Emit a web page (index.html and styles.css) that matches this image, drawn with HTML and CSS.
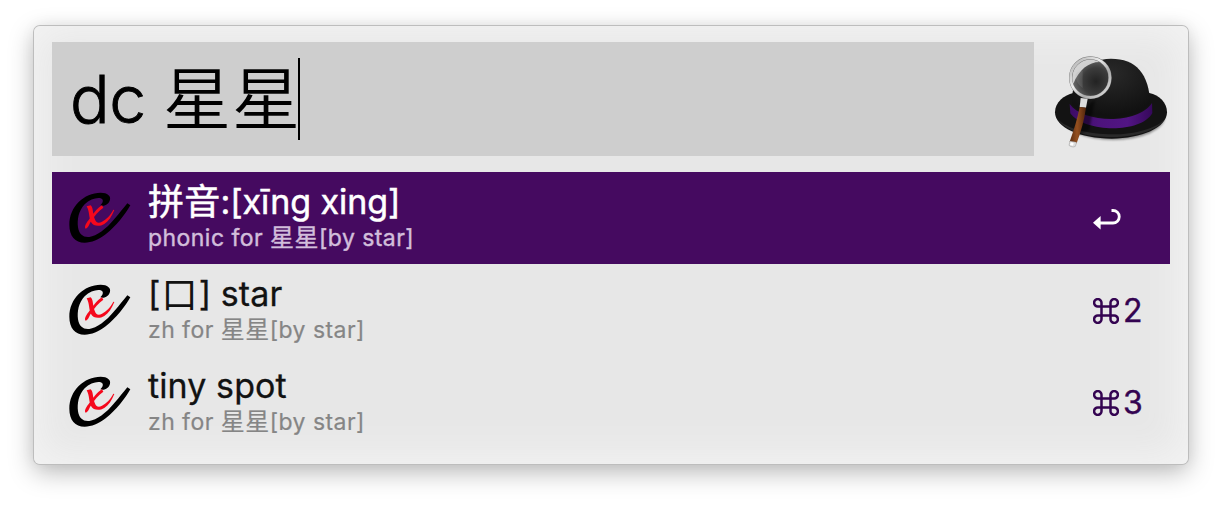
FILE: index.html
```html
<!DOCTYPE html>
<html lang="zh-CN">
<head>
<meta charset="utf-8">
<title>Alfred</title>
<link rel="stylesheet" href="styles.css">
</head>
<body>
<svg class="defs" width="0" height="0" aria-hidden="true">
  <symbol id="logo" viewBox="57 55 192 156">
    <path d="M241 98C226 125 197 162 168 184C146 201 124 210 104 210C75 210 58 190 58 156C58 102 102 60 152 60C173 60 183 70 180 81C177 94 164 102 151 98C157 92 161 86 157 80C149 72 122 77 104 95C86 114 81 140 84 164C87 185 100 195 118 193C139 190 169 169 193 139C210 120 221 105 232 92Z"/>
    <path d="M110 101L122 98C130 104 128 124 134 138C138 150 145 153 156 147C169 140 180 130 190 111L193 112C185 132 176 146 163 154C148 163 130 161 123 148C116 135 119 116 110 101ZM156 98L160 105C146 114 133 130 123 146C117 155 116 166 107 168C102 164 107 153 116 142C127 128 141 106 156 98Z" fill="#f5081c"/>
  </symbol>
</svg>
<main class="window">
  <header class="top">
    <div class="search"><span class="query">dc</span><span class="query-cjk">星星</span><span class="caret"></span></div>
    <svg class="hat" viewBox="60 60 360 300">
      <defs>
        <radialGradient id="crown" cx=".5" cy=".25" r=".7"><stop offset="0" stop-color="#292929"/><stop offset="1" stop-color="#111"/></radialGradient>
        <linearGradient id="band"><stop offset="0" stop-color="#3d0b66"/><stop offset=".35" stop-color="#4d137c"/><stop offset=".7" stop-color="#521584"/><stop offset="1" stop-color="#35085a"/></linearGradient>
        <radialGradient id="lens" cx=".65" cy=".6" r=".6"><stop offset="0" stop-color="#222"/><stop offset=".6" stop-color="#3c3c3c"/><stop offset="1" stop-color="#696969"/></radialGradient>
        <linearGradient id="rim" x2="1" y2="1"><stop offset="0" stop-color="#a9a9a9"/><stop offset=".4" stop-color="#eee"/><stop offset=".65" stop-color="#aaa"/><stop offset="1" stop-color="#e4e4e4"/></linearGradient>
        <linearGradient id="wood"><stop offset="0" stop-color="#5a2b10"/><stop offset=".45" stop-color="#95501f"/><stop offset="1" stop-color="#52250c"/></linearGradient>
        <filter id="soft"><feGaussianBlur stdDeviation="3"/></filter>
      </defs>
      <ellipse cx="250" cy="260" rx="155" ry="70" fill="#000" opacity=".4" filter="url(#soft)"/>
      <path d="M75 247C75 216 103 195 130 189H358C388 195 411 218 411 247C411 293 334 326 245 326C149 326 75 292 75 247Z" fill="#131313"/>
      <path d="M82 267C110 307 179 322 248 321C320 320 384 301 405 266C382 294 317 313 247 313C176 313 113 297 82 267Z" fill="#292929"/>
      <path d="M119 222C160 281 324 284 366 219L367 249C332 312 163 308 121 250Z" fill="url(#band)"/>
      <path d="M126 225C123 137 165 87 243 86C318 86 357 130 361 222C318 278 169 276 126 225Z" fill="url(#crown)"/>
      <path d="M166 230L195 210L178 300L143 315Z" fill="#000" opacity=".45" filter="url(#soft)"/>
      <circle cx="181" cy="143" r="57" fill="url(#lens)"/>
      <path d="M126 153C126 107 150 86 181 85C195 85 207 89 215 96C180 93 148 116 130 161Z" fill="#dedede" opacity=".9"/>
      <path d="M137 136C139 125 147 124 158 122V174C145 166 137 150 137 136Z" fill="#aaa" opacity=".18"/>
      <circle cx="181" cy="143" r="59" fill="none" stroke="#777" stroke-width="10"/>
      <circle cx="181" cy="143" r="59" fill="none" stroke="url(#rim)" stroke-width="8"/>
      <path d="M152 204L173 206L168 233L149 231Z" fill="#ddd"/>
      <path d="M149 231L168 233C163 270 153 304 140 340L119 335C131 302 142 267 149 231Z" fill="url(#wood)"/>
      <path d="M120 333L140 337L136 349C131 353 121 350 117 346Z" fill="#ddd" stroke="#777" stroke-width="1"/>
      <path d="M122 337L131 339L129 347L120 345Z" fill="#fff"/>
    </svg>
  </header>
  <section class="results">
    <article class="row selected">
      <svg class="icon"><use href="#logo"/></svg>
      <div class="copy">
        <div class="title"><span class="cjk">拼音</span>:[xīng xing]</div>
        <div class="sub">phonic for <span class="cjk">星星</span>[by star]</div>
      </div>
      <div class="key"><svg class="return" viewBox="0 0 28 22"><path d="M18.5 2.5H20A6 6 0 0 1 20 15H7" fill="none" stroke="#fff" stroke-width="2.8"/><path d="M0 14.8L7.6 8V21.5Z" fill="#fff"/></svg></div>
    </article>
    <article class="row">
      <svg class="icon"><use href="#logo"/></svg>
      <div class="copy">
        <div class="title">[<span class="mouth">口</span>] star</div>
        <div class="sub">zh for <span class="cjk">星星</span>[by star]</div>
      </div>
      <div class="key"><svg class="command" viewBox="0 0 26 26"><path d="M8.5 8.5H17.5V17.5H8.5ZM8.5 8.5H5A3.7 3.7 0 1 1 8.5 5ZM17.5 8.5V5A3.7 3.7 0 1 1 21 8.5ZM17.5 17.5H21A3.7 3.7 0 1 1 17.5 21ZM8.5 17.5V21A3.7 3.7 0 1 1 5 17.5Z"/></svg><span>2</span></div>
    </article>
    <article class="row">
      <svg class="icon"><use href="#logo"/></svg>
      <div class="copy">
        <div class="title">tiny spot</div>
        <div class="sub">zh for <span class="cjk">星星</span>[by star]</div>
      </div>
      <div class="key"><svg class="command" viewBox="0 0 26 26"><path d="M8.5 8.5H17.5V17.5H8.5ZM8.5 8.5H5A3.7 3.7 0 1 1 8.5 5ZM17.5 8.5V5A3.7 3.7 0 1 1 21 8.5ZM17.5 17.5H21A3.7 3.7 0 1 1 17.5 21ZM8.5 17.5V21A3.7 3.7 0 1 1 5 17.5Z"/></svg><span>3</span></div>
    </article>
  </section>
</main>
</body>
</html>
```
FILE: styles.css
```css
* { box-sizing: border-box; }
body {
  margin: 0;
  height: 506px;
  padding: 26px 34px;
  overflow: hidden;
  background: #fff;
  font-family: Inter, "Noto Sans CJK SC", sans-serif;
}
.defs { display: block; height: 0; }
.window {
  width: 1154px;
  height: 438px;
  padding: 16px 18px;
  border-radius: 6px;
  background: #e7e7e7;
  box-shadow: inset 0 0 36px 8px #f3f3f3, 0 0 0 1px #bdbdbd, 0 8px 26px rgba(0, 0, 0, .28), 0 0 16px rgba(0, 0, 0, .05);
}
.top { display: flex; height: 114px; }
.search {
  display: flex;
  align-items: center;
  width: 982px;
  height: 114px;
  padding-left: 18px;
  background: #cecece;
  color: #000;
  white-space: nowrap;
}
.query {
  width: 93px;
  padding-top: 1px;
  font-size: 66px;
  font-weight: 300;
  line-height: 113px;
  letter-spacing: -.5px;
  -webkit-text-stroke: .9px #000;
}
.query-cjk {
  width: 135px;
  padding-bottom: 8px;
  font-family: "Noto Sans CJK SC", sans-serif;
  font-size: 68px;
  font-weight: 350;
  line-height: 106px;
  letter-spacing: 1px;
}
.caret { width: 2px; height: 82px; background: #000; }
.hat { width: 120px; height: 100px; margin: 8px 0 0 16px; }
.results { margin-top: 16px; }
.row { display: flex; width: 1118px; height: 92px; color: #121212; }
.selected { background: #450a60; color: #fff; }
.icon { flex: none; width: 64px; height: 52px; margin: 19px 0 0 17px; }
.copy { flex: none; width: 958px; padding: 8px 0 0 15px; white-space: nowrap; }
.title {
  height: 44px;
  font-size: 34px;
  font-weight: 400;
  line-height: 44px;
  letter-spacing: .1px;
  -webkit-text-stroke: .3px currentColor;
}
.sub {
  height: 28px;
  color: #858585;
  font-size: 23px;
  line-height: 28px;
  letter-spacing: .45px;
  -webkit-text-stroke: .2px currentColor;
}
.selected .title { letter-spacing: -.1px; -webkit-text-stroke-width: .5px; }
.selected .sub { color: #d2bedb; -webkit-text-stroke-width: .4px; }
.cjk { font-family: "Noto Sans CJK SC", sans-serif; line-height: 1; }
.title .cjk { font-size: 36px; letter-spacing: .3px; font-weight: 400; vertical-align: -1px; }
.sub .cjk { font-size: 24px; letter-spacing: .5px; font-weight: 400; }
.mouth { margin: 0 1px; font-size: 36px; line-height: 1; vertical-align: -2px; -webkit-text-stroke-width: 0; }
.key {
  display: flex;
  align-items: center;
  width: 79px;
  padding: 1px 0 0 2px;
  color: #340451;
  font-size: 32px;
}
.key span { margin-left: 4px; -webkit-text-stroke: .4px currentColor; }
.return { width: 28px; height: 22px; }
.command { width: 26px; height: 26px; fill: none; stroke: #340451; stroke-width: 2.5; }
```
